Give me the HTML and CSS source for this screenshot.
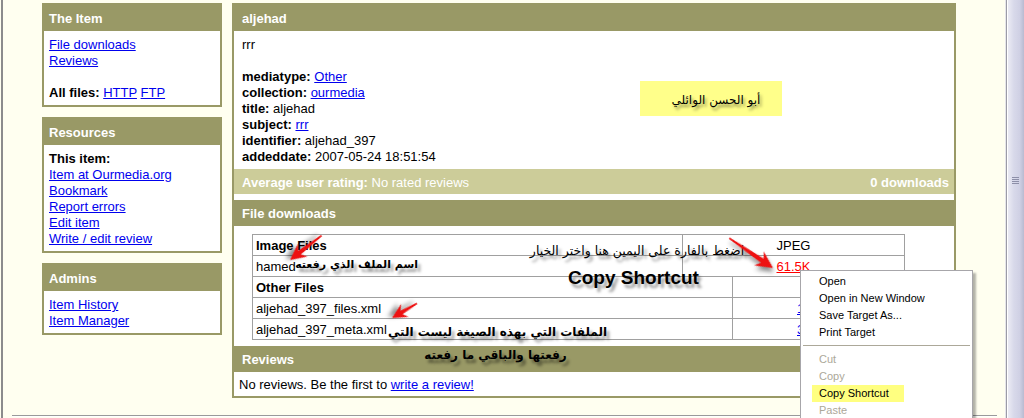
FILE: index.html
```html
<!DOCTYPE html>
<html lang="en">
<head>
<meta charset="utf-8">
<title>aljehad</title>
<link rel="stylesheet" href="styles.css">
</head>
<body>
<div class="window">
  <div class="page">
    <div class="cols">
      <aside class="sidebar">
        <section class="box">
          <h2 class="head">The Item</h2>
          <div class="box-body">
            <div class="line"><a href="#">File downloads</a></div>
            <div class="line"><a href="#">Reviews</a></div>
            <div class="line"></div>
            <div class="line"><b>All files:</b> <a href="#">HTTP</a> <a href="#">FTP</a></div>
          </div>
        </section>
        <section class="box">
          <h2 class="head">Resources</h2>
          <div class="box-body">
            <div class="line"><b>This item:</b></div>
            <div class="line"><a href="#">Item at Ourmedia.org</a></div>
            <div class="line"><a href="#">Bookmark</a></div>
            <div class="line"><a href="#">Report errors</a></div>
            <div class="line"><a href="#">Edit item</a></div>
            <div class="line"><a href="#">Write / edit review</a></div>
          </div>
        </section>
        <section class="box">
          <h2 class="head">Admins</h2>
          <div class="box-body">
            <div class="line"><a href="#">Item History</a></div>
            <div class="line"><a href="#">Item Manager</a></div>
          </div>
        </section>
      </aside>

      <main class="mainbox">
        <h1 class="head main-head">aljehad</h1>
        <div class="meta">
          <div class="line">rrr</div>
          <div class="line"></div>
          <div class="line"><b>mediatype:</b> <a href="#">Other</a></div>
          <div class="line"><b>collection:</b> <a href="#">ourmedia</a></div>
          <div class="line"><b>title:</b> aljehad</div>
          <div class="line"><b>subject:</b> <a href="#">rrr</a></div>
          <div class="line"><b>identifier:</b> aljehad_397</div>
          <div class="line"><b>addeddate:</b> 2007-05-24 18:51:54</div>
        </div>
        <div class="rating">
          <span><b>Average user rating:</b> No rated reviews</span>
          <b>0 downloads</b>
        </div>
        <h2 class="head main-head">File downloads</h2>
        <div class="files">
          <table class="ftable">
            <colgroup><col class="c1"><col class="c2"><col class="c3"></colgroup>
            <tr><td><b>Image Files</b></td><td colspan="2" class="mid">JPEG</td></tr>
            <tr><td>hamed</td><td colspan="2" class="mid"><a href="#" class="red">61.5K</a></td></tr>
            <tr><td colspan="2"><b>Other Files</b></td><td></td></tr>
            <tr><td colspan="2">aljehad_397_files.xml</td><td class="sz"><a href="#">1.4K</a></td></tr>
            <tr><td colspan="2">aljehad_397_meta.xml</td><td class="sz"><a href="#">3.2K</a></td></tr>
          </table>
        </div>
        <h2 class="head main-head">Reviews</h2>
        <div class="reviews">No reviews. Be the first to <a href="#">write a review!</a></div>
      </main>
    </div>
    <div class="rule"></div>
  </div>
  <div class="scrollbar"><div class="grip"><i></i><i></i><i></i><i></i></div></div>
</div>

<!-- annotations pasted over the screenshot -->
<div class="note-box"><span class="ar">أبو الحسن الوائلي</span></div>
<div class="ann ann-a ar">اضغط بالفارة على اليمين هنا واختر الخيار</div>
<div class="ann ann-b">Copy Shortcut</div>
<div class="ann ann-c ar">اسم الملف الذي رفعته</div>
<div class="ann ann-d ar">الملفات التي بهذه الصيغة ليست التي</div>
<div class="ann ann-e ar">رفعتها والباقي ما رفعته</div>

<svg class="arrows" width="1024" height="418" viewBox="0 0 1024 418">
  <g class="arrow" transform="translate(290 260) rotate(142.3)">
    <path d="M0 0 L-16 -8 L-12 -2.2 L-40 -0.7 L-40 0.7 L-12 2.2 L-16 8 Z"/>
  </g>
  <g class="arrow" transform="translate(392 318) rotate(149.7)">
    <path d="M0 0 L-15 -7.5 L-11 -2 L-29 -0.7 L-29 0.7 L-11 2 L-15 7.5 Z"/>
  </g>
  <g class="arrow" transform="translate(773 268) rotate(34.3)">
    <path d="M0 0 L-17 -8.5 L-13 -2.4 L-53 -0.7 L-53 0.7 L-13 2.4 L-17 8.5 Z"/>
  </g>
</svg>

<div class="ctx">
  <div class="ctx-item">Open</div>
  <div class="ctx-item">Open in New Window</div>
  <div class="ctx-item">Save Target As...</div>
  <div class="ctx-item">Print Target</div>
  <div class="ctx-sep"></div>
  <div class="ctx-item off">Cut</div>
  <div class="ctx-item off">Copy</div>
  <div class="ctx-item"><span class="hl">Copy Shortcut</span></div>
  <div class="ctx-item off">Paste</div>
</div>
</body>
</html>
```

FILE: styles.css
```css
html, body {
  margin: 0;
  padding: 0;
  width: 1024px;
  height: 418px;
  overflow: hidden;
}
body {
  background: #fffff0;
  font-family: "Liberation Sans", Arial, sans-serif;
  font-size: 13px;
  line-height: 16px;
  color: #000;
  position: relative;
}
a { color: #0000ee; text-decoration: underline; }
b { font-weight: bold; }

.window {
  display: flex;
  height: 418px;
  padding-left: 1px;
  box-sizing: border-box;
}
.page {
  flex: 1;
  display: flex;
  flex-direction: column;
  border-left: 2px solid #8c8c8c;
  min-width: 0;
}
.cols {
  flex: 1;
  display: flex;
  align-items: flex-start;
  gap: 10px;
  padding-top: 3px;
  padding-left: 39px;
  overflow: hidden;
}
.rule {
  height: 1px;
  background: #9a9a9a;
  margin: 0 9px 2px 9px;
  box-shadow: 0 1px 0 #fff;
}

/* sidebar */
.sidebar {
  width: 180px;
  display: flex;
  flex-direction: column;
  gap: 10px;
}
.box {
  border: 2px solid #999966;
  background: #fff;
}
.head {
  margin: 0;
  background: #999966;
  color: #fff;
  font-size: 13px;
  font-weight: bold;
  height: 25px;
  line-height: 26px;
  padding: 1px 5px 0;
}
.box-body {
  padding: 6px 5px 4px;
}
.line { height: 16px; white-space: nowrap; }

/* main box */
.mainbox {
  width: 724px;
  box-sizing: border-box;
  border: 2px solid #999966;
  background: #fff;
}
.main-head { padding: 1px 8px 0; }
.meta { padding: 6px 8px 4px; }
.rating {
  background: #cccc99;
  color: #fff;
  height: 24px;
  line-height: 25px;
  padding: 1px 5px 0 8px;
  margin-bottom: 6px;
  display: flex;
  justify-content: space-between;
}
.files { padding: 8px 0 6px 18px; }
.ftable {
  border-collapse: collapse;
  table-layout: fixed;
  width: 652px;
}
.ftable .c1 { width: 430px; }
.ftable .c2 { width: 50px; }
.ftable .c3 { width: 172px; }
.ftable td {
  border: 1px solid #a0a0a0;
  padding: 3px 3px 1px;
  height: 16px;
  line-height: 16px;
  white-space: nowrap;
  overflow: hidden;
}
.ftable td.mid { text-align: center; }
.ftable td.sz { padding-left: 64px; }
a.red { color: #ff0000; }
.reviews { padding: 5px 5px 3px; }

/* scrollbar */
.scrollbar {
  width: 18px;
  flex: none;
  box-sizing: border-box;
  border-left: 1px solid #9c9ca6;
  box-shadow: inset 1px 0 0 #fff, -1px 0 0 #e6e6ea;
  background: linear-gradient(to right, #eeeef6 0%, #d8d9ea 40%, #cfd0e4 75%, #b9bad0 100%);
  display: flex;
  align-items: flex-start;
  justify-content: center;
  padding-top: 177px;
}
.grip { display: flex; flex-direction: column; gap: 1px; }
.grip i {
  display: block;
  width: 7px;
  height: 1px;
  background: #8d8fa8;
}

/* annotations */
.ar {
  font-family: "DejaVu Sans", "Noto Sans", sans-serif;
  font-weight: bold;
  direction: rtl;
}
.note-box {
  position: absolute;
  left: 640px;
  top: 81px;
  width: 142px;
  height: 35px;
  background: #ffff8a;
  display: flex;
  align-items: center;
  justify-content: center;
}
.note-box .ar {
  font-size: 12px;
  font-weight: normal;
  text-shadow: 2px 3px 3px rgba(0, 0, 0, 0.45);
  padding-left: 10px;
  padding-top: 3px;
}
.ann {
  position: absolute;
  white-space: nowrap;
  color: #000;
  text-shadow: 3px 4px 3px rgba(0, 0, 0, 0.4);
  line-height: 18px;
}
.ann-a { left: 527px; top: 242px; width: 220px; font-size: 12.5px; font-weight: normal; text-align: center; }
.ann-b {
  left: 568px;
  top: 267px;
  font-family: "Liberation Sans", Arial, sans-serif;
  font-weight: bold;
  font-size: 19px;
  line-height: 22px;
}
.ann-c { left: 302px; top: 256px; width: 116px; font-size: 11px; text-align: center; }
.ann-d { left: 388px; top: 323px; width: 219px; font-size: 12px; text-align: center; }
.ann-e { left: 424px; top: 346px; width: 143px; font-size: 12px; text-align: center; }

.arrows {
  position: absolute;
  left: 0;
  top: 0;
  pointer-events: none;
}
.arrow path {
  fill: #ee1111;
  filter: drop-shadow(3px 3px 2px rgba(0, 0, 0, 0.45));
}

/* context menu */
.ctx {
  position: absolute;
  left: 800px;
  top: 270px;
  width: 173px;
  height: 160px;
  box-sizing: border-box;
  background: #fff;
  border: 1px solid #a7a6aa;
  box-shadow: 3px 3px 2px rgba(0, 0, 0, 0.3);
  padding-top: 2px;
  font-family: "Liberation Sans", Tahoma, sans-serif;
  font-size: 11px;
}
.ctx-item {
  height: 17px;
  line-height: 17px;
  padding-left: 18px;
  color: #000;
}
.ctx-item.off { color: #aca899; }
.ctx-sep {
  height: 1px;
  background: #aca899;
  margin: 4px 2px 5px;
}
.hl {
  display: inline-block;
  background: #ffff80;
  padding: 0 15px 0 7px;
  margin-left: -7px;
}
```
